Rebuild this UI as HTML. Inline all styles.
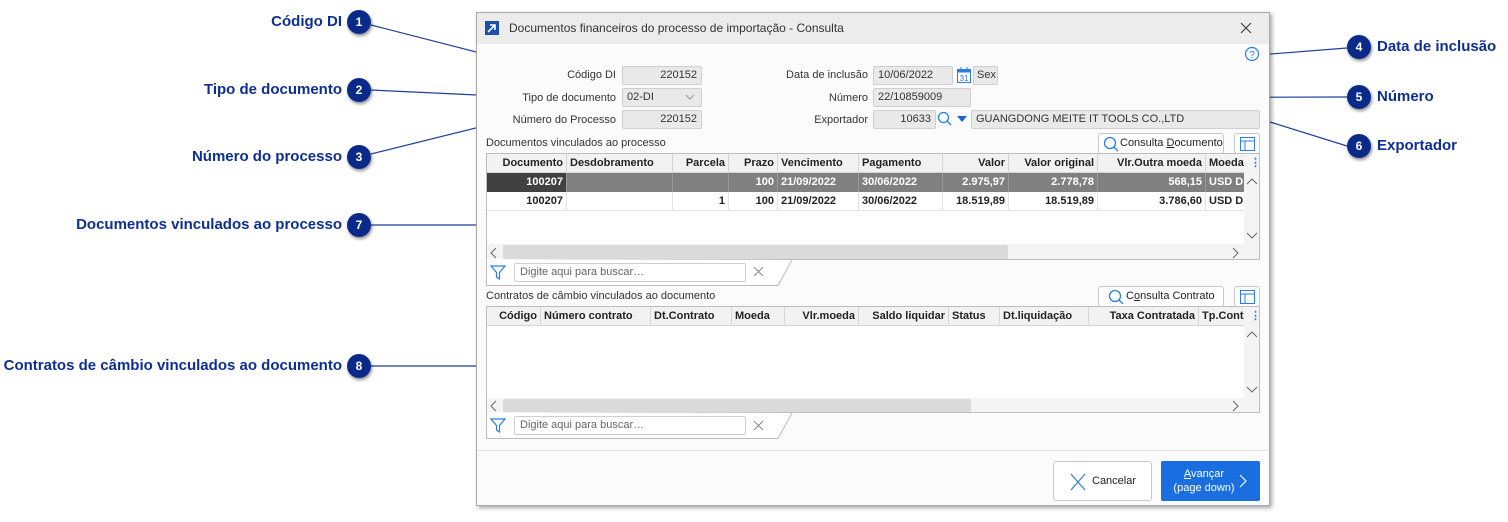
<!DOCTYPE html>
<html><head><meta charset="utf-8">
<style>
*{box-sizing:border-box;margin:0;padding:0}
body{width:1508px;height:522px;background:#fff;position:relative;overflow:hidden;font-family:"Liberation Sans",sans-serif;font-size:11px;color:#222}
.a{position:absolute}
.lbl{position:absolute;text-align:right;font-size:11px;color:#333;white-space:nowrap}
.inp{position:absolute;background:#e9e9e9;border:1px solid #cfcfcf;border-radius:2px;height:19px;line-height:17px;padding:0 4px;font-size:11px;color:#333;white-space:nowrap;overflow:hidden}
.r{text-align:right}
.co{position:absolute;font-weight:bold;font-size:15px;color:#0d2f91;white-space:nowrap;line-height:20px}
.bub{position:absolute;width:24px;height:24px;border-radius:50%;background:#0a2a8a;color:#fff;font-weight:bold;font-size:12px;text-align:center;line-height:24px;box-shadow:1px 2px 3px rgba(0,0,0,.45)}
.grid{position:absolute;border:1px solid #bdbdbd;background:#fff}
.hdr{position:absolute;left:0;top:0;height:19px;background:#f2f2f2;border-bottom:1px solid #d6d6d6;width:100%}
.c{position:absolute;height:19px;line-height:19px;font-weight:bold;font-size:11px;padding:0 3px;white-space:nowrap;overflow:hidden;border-right:1px solid #d6d6d6}
.btn{position:absolute;background:#fff;border:1px solid #c8c8c8;border-radius:3px;font-size:11px;color:#222}
</style></head><body>

<!-- callout lines -->
<svg class="a" style="left:0;top:0" width="1508" height="522">
<g stroke="#1b3f9e" stroke-width="1.2" fill="none">
<line x1="371" y1="25" x2="566" y2="75"/>
<line x1="371" y1="90" x2="519" y2="97"/>
<line x1="371" y1="154" x2="516" y2="118"/>
<line x1="1347" y1="48" x2="1005" y2="75"/>
<line x1="1347" y1="97" x2="982" y2="98"/>
<line x1="1347" y1="146" x2="1270" y2="122"/>
<line x1="371" y1="225" x2="486" y2="225"/>
<line x1="371" y1="366" x2="486" y2="366"/>
</g></svg>

<div class="co" style="right:1166px;top:12px">Código DI</div><div class="bub" style="left:347px;top:10px">1</div>
<div class="co" style="right:1166px;top:80px">Tipo de documento</div><div class="bub" style="left:347px;top:78px">2</div>
<div class="co" style="right:1166px;top:147px">Número do processo</div><div class="bub" style="left:347px;top:145px">3</div>
<div class="co" style="right:1166px;top:215px">Documentos vinculados ao processo</div><div class="bub" style="left:347px;top:213px">7</div>
<div class="co" style="right:1166px;top:356px">Contratos de câmbio vinculados ao documento</div><div class="bub" style="left:347px;top:354px">8</div>
<div class="bub" style="left:1347px;top:35px">4</div><div class="co" style="left:1377px;top:37px">Data de inclusão</div>
<div class="bub" style="left:1347px;top:85px">5</div><div class="co" style="left:1377px;top:87px">Número</div>
<div class="bub" style="left:1347px;top:134px">6</div><div class="co" style="left:1377px;top:136px">Exportador</div>

<!-- dialog -->
<div class="a" style="left:476px;top:12px;width:794px;height:494px;background:#fbfbfb;border:1px solid #a9a9a9;box-shadow:2px 2px 4px rgba(0,0,0,.35)">
 <div class="a" style="left:0;top:0;width:792px;height:31px;background:#ececec"></div>
</div>
<div class="a" style="left:485px;top:21px;width:14px;height:14px;background:#1c4fa8"></div>
<svg class="a" style="left:485px;top:21px" width="14" height="14"><path d="M3 11 L10 4 M5 4 H10 V9" stroke="#fff" stroke-width="1.6" fill="none"/></svg>
<div class="a" style="left:509px;top:21px;font-size:12px;color:#333">Documentos financeiros do processo de importação - Consulta</div>
<svg class="a" style="left:1240px;top:22px" width="12" height="12"><path d="M1 1L11 11M11 1L1 11" stroke="#444" stroke-width="1.2"/></svg>
<svg class="a" style="left:1244px;top:46px" width="16" height="16"><circle cx="8" cy="8" r="6.5" stroke="#2a7de1" fill="none" stroke-width="1.2"/><text x="8" y="12" font-size="10" text-anchor="middle" fill="#2a7de1" font-family="Liberation Sans">?</text></svg>

<!-- form -->
<div class="lbl" style="right:892px;top:69px">Código DI</div>
<div class="inp r" style="left:622px;top:66px;width:80px">220152</div>
<div class="lbl" style="right:892px;top:92px">Tipo de documento</div>
<div class="inp" style="left:622px;top:88px;width:80px">02-DI</div>
<svg class="a" style="left:685px;top:94px" width="10" height="6"><path d="M1 1L5 5L9 1" stroke="#999" fill="none"/></svg>
<div class="lbl" style="right:892px;top:114px">Número do Processo</div>
<div class="inp r" style="left:622px;top:110px;width:80px">220152</div>

<div class="lbl" style="right:640px;top:69px">Data de inclusão</div>
<div class="inp" style="left:873px;top:66px;width:80px">10/06/2022</div>
<svg class="a" style="left:956px;top:66px" width="16" height="18"><rect x="1.5" y="3.5" width="13" height="13" fill="#fff" stroke="#2a7de1"/><rect x="1.5" y="3.5" width="13" height="3" fill="#2a7de1"/><line x1="5" y1="1" x2="5" y2="5" stroke="#2a7de1"/><line x1="11" y1="1" x2="11" y2="5" stroke="#2a7de1"/><text x="8" y="15" font-size="8" text-anchor="middle" fill="#2a7de1" font-family="Liberation Sans">31</text></svg>
<div class="inp" style="left:973px;top:66px;width:25px;padding:0 3px">Sex</div>
<div class="lbl" style="right:640px;top:92px">Número</div>
<div class="inp" style="left:873px;top:88px;width:98px">22/10859009</div>
<div class="lbl" style="right:640px;top:114px">Exportador</div>
<div class="inp r" style="left:873px;top:110px;width:63px">10633</div>
<svg class="a" style="left:937px;top:111px" width="16" height="16"><circle cx="6.5" cy="6.5" r="5" stroke="#2a7de1" fill="none" stroke-width="1.3"/><line x1="10" y1="10" x2="14" y2="14" stroke="#2a7de1" stroke-width="1.3"/></svg>
<svg class="a" style="left:957px;top:116px" width="10" height="6"><path d="M0 0H10L5 6Z" fill="#1d63c9"/></svg>
<div class="inp" style="left:971px;top:110px;width:289px">GUANGDONG MEITE IT TOOLS CO.,LTD</div>

<!-- grid 1 -->
<div class="a" style="left:486px;top:137px;font-size:11px;color:#333">Documentos vinculados ao processo</div>
<div class="btn" style="left:1098px;top:133px;width:126px;height:21px"><svg class="a" style="left:4px;top:2px" width="16" height="16"><circle cx="7" cy="7" r="5.5" stroke="#2a7de1" fill="none" stroke-width="1.3"/><line x1="11" y1="11" x2="15" y2="15" stroke="#2a7de1" stroke-width="1.3"/></svg><span class="a" style="left:21px;top:3px">Consulta <u>D</u>ocumento</span></div>
<div class="btn" style="left:1234px;top:133px;width:26px;height:21px"><svg class="a" style="left:5px;top:3px" width="15" height="14"><rect x="0.5" y="0.5" width="14" height="13" fill="none" stroke="#2a7de1"/><line x1="0.5" y1="4" x2="14.5" y2="4" stroke="#2a7de1"/><line x1="5" y1="4" x2="5" y2="13.5" stroke="#2a7de1"/></svg></div>

<div class="grid" style="left:486px;top:153px;width:774px;height:107px;overflow:hidden">
 <div class="hdr"></div>
 <div class="c r" style="left:0;top:0;width:80px">Documento</div>
 <div class="c" style="left:80px;top:0;width:106px">Desdobramento</div>
 <div class="c r" style="left:186px;top:0;width:56px">Parcela</div>
 <div class="c r" style="left:242px;top:0;width:49px">Prazo</div>
 <div class="c" style="left:291px;top:0;width:81px">Vencimento</div>
 <div class="c" style="left:372px;top:0;width:84px">Pagamento</div>
 <div class="c r" style="left:456px;top:0;width:66px">Valor</div>
 <div class="c r" style="left:522px;top:0;width:89px">Valor original</div>
 <div class="c r" style="left:611px;top:0;width:108px">Vlr.Outra moeda</div>
 <div class="c" style="left:719px;top:0;width:38px;border:0">Moeda</div>
 <div class="a" style="left:0;top:19px;width:757px;height:19px;background:#808080"></div>
 <div class="a" style="left:0;top:19px;width:80px;height:19px;background:#414141"></div>
 <div style="color:#fff">
 <div class="c r" style="left:0;top:19px;width:80px;border-color:#999">100207</div>
 <div class="c" style="left:80px;top:19px;width:106px;border-color:#999"></div>
 <div class="c r" style="left:186px;top:19px;width:56px;border-color:#999"></div>
 <div class="c r" style="left:242px;top:19px;width:49px;border-color:#999">100</div>
 <div class="c" style="left:291px;top:19px;width:81px;border-color:#999">21/09/2022</div>
 <div class="c" style="left:372px;top:19px;width:84px;border-color:#999">30/06/2022</div>
 <div class="c r" style="left:456px;top:19px;width:66px;border-color:#999">2.975,97</div>
 <div class="c r" style="left:522px;top:19px;width:89px;border-color:#999">2.778,78</div>
 <div class="c r" style="left:611px;top:19px;width:108px;border-color:#999">568,15</div>
 <div class="c" style="left:719px;top:19px;width:38px;border:0">USD D</div>
 </div>
 <div class="a" style="left:0;top:56px;width:757px;border-top:1px solid #e3e3e3"></div>
 <div class="c r" style="left:0;top:38px;width:80px;border-color:#e3e3e3">100207</div>
 <div class="c" style="left:80px;top:38px;width:106px;border-color:#e3e3e3"></div>
 <div class="c r" style="left:186px;top:38px;width:56px;border-color:#e3e3e3">1</div>
 <div class="c r" style="left:242px;top:38px;width:49px;border-color:#e3e3e3">100</div>
 <div class="c" style="left:291px;top:38px;width:81px;border-color:#e3e3e3">21/09/2022</div>
 <div class="c" style="left:372px;top:38px;width:84px;border-color:#e3e3e3">30/06/2022</div>
 <div class="c r" style="left:456px;top:38px;width:66px;border-color:#e3e3e3">18.519,89</div>
 <div class="c r" style="left:522px;top:38px;width:89px;border-color:#e3e3e3">18.519,89</div>
 <div class="c r" style="left:611px;top:38px;width:108px;border-color:#e3e3e3">3.786,60</div>
 <div class="c" style="left:719px;top:38px;width:38px;border:0">USD D</div>
 <div class="a" style="left:757px;top:0;width:16px;height:90px;background:#f4f4f4"></div>
 <div class="a" style="left:763px;top:2px;color:#2a7de1;font-weight:bold">⋮</div>
 <svg class="a" style="left:759px;top:24px" width="12" height="8"><path d="M1 6L6 1L11 6" stroke="#666" fill="none"/></svg>
 <svg class="a" style="left:759px;top:78px" width="12" height="8"><path d="M1 1L6 6L11 1" stroke="#666" fill="none"/></svg>
 <div class="a" style="left:0;top:90px;width:773px;height:16px;background:#f4f4f4"></div>
 <div class="a" style="left:16px;top:91px;width:505px;height:14px;background:#dadada;border-radius:2px"></div>
 <svg class="a" style="left:3px;top:93px" width="8" height="12"><path d="M6 1L1 6L6 11" stroke="#666" fill="none"/></svg>
 <svg class="a" style="left:745px;top:93px" width="8" height="12"><path d="M1 1L6 6L1 11" stroke="#666" fill="none"/></svg>
</div>
<!-- filter 1 -->
<svg class="a" style="left:486px;top:259px" width="310" height="28"><path d="M0.5 0 V26.5 H292 L306 1" stroke="#bdbdbd" fill="#fff"/></svg>
<svg class="a" style="left:490px;top:265px" width="16" height="15"><path d="M1 1H15L9.5 7.5V14L6.5 12V7.5Z" stroke="#2a7de1" fill="none" stroke-width="1.2"/></svg>
<div class="a" style="left:514px;top:263px;width:232px;height:19px;border:1px solid #cfcfcf;background:#fff;border-radius:2px;padding:2px 5px;color:#666">Digite aqui para buscar…</div>
<svg class="a" style="left:753px;top:266px" width="11" height="11"><path d="M1 1L10 10M10 1L1 10" stroke="#888"/></svg>

<!-- grid 2 -->
<div class="a" style="left:486px;top:290px;font-size:11px;color:#333">Contratos de câmbio vinculados ao documento</div>
<div class="btn" style="left:1098px;top:286px;width:126px;height:21px"><svg class="a" style="left:9px;top:2px" width="16" height="16"><circle cx="7" cy="7" r="5.5" stroke="#2a7de1" fill="none" stroke-width="1.3"/><line x1="11" y1="11" x2="15" y2="15" stroke="#2a7de1" stroke-width="1.3"/></svg><span class="a" style="left:27px;top:3px">C<u>o</u>nsulta Contrato</span></div>
<div class="btn" style="left:1234px;top:286px;width:26px;height:21px"><svg class="a" style="left:5px;top:3px" width="15" height="14"><rect x="0.5" y="0.5" width="14" height="13" fill="none" stroke="#2a7de1"/><line x1="0.5" y1="4" x2="14.5" y2="4" stroke="#2a7de1"/><line x1="5" y1="4" x2="5" y2="13.5" stroke="#2a7de1"/></svg></div>
<div class="grid" style="left:486px;top:306px;width:774px;height:107px;overflow:hidden">
 <div class="hdr"></div>
 <div class="c r" style="left:0;top:0;width:54px">Código</div>
 <div class="c" style="left:54px;top:0;width:110px">Número contrato</div>
 <div class="c" style="left:164px;top:0;width:81px">Dt.Contrato</div>
 <div class="c" style="left:245px;top:0;width:53px">Moeda</div>
 <div class="c r" style="left:298px;top:0;width:74px">Vlr.moeda</div>
 <div class="c r" style="left:372px;top:0;width:90px">Saldo liquidar</div>
 <div class="c" style="left:462px;top:0;width:51px">Status</div>
 <div class="c" style="left:513px;top:0;width:89px">Dt.liquidação</div>
 <div class="c r" style="left:602px;top:0;width:110px">Taxa Contratada</div>
 <div class="c" style="left:712px;top:0;width:45px;border:0">Tp.Cont</div>
 <div class="a" style="left:757px;top:0;width:16px;height:91px;background:#f4f4f4"></div>
 <div class="a" style="left:763px;top:2px;color:#2a7de1;font-weight:bold">⋮</div>
 <svg class="a" style="left:759px;top:24px" width="12" height="8"><path d="M1 6L6 1L11 6" stroke="#666" fill="none"/></svg>
 <svg class="a" style="left:759px;top:79px" width="12" height="8"><path d="M1 1L6 6L11 1" stroke="#666" fill="none"/></svg>
 <div class="a" style="left:0;top:91px;width:773px;height:15px;background:#f4f4f4"></div>
 <div class="a" style="left:16px;top:92px;width:468px;height:13px;background:#dadada;border-radius:2px"></div>
 <svg class="a" style="left:3px;top:93px" width="8" height="12"><path d="M6 1L1 6L6 11" stroke="#666" fill="none"/></svg>
 <svg class="a" style="left:745px;top:93px" width="8" height="12"><path d="M1 1L6 6L1 11" stroke="#666" fill="none"/></svg>
</div>
<svg class="a" style="left:486px;top:412px" width="310" height="28"><path d="M0.5 0 V26.5 H292 L306 1" stroke="#bdbdbd" fill="#fff"/></svg>
<svg class="a" style="left:490px;top:418px" width="16" height="15"><path d="M1 1H15L9.5 7.5V14L6.5 12V7.5Z" stroke="#2a7de1" fill="none" stroke-width="1.2"/></svg>
<div class="a" style="left:514px;top:416px;width:232px;height:19px;border:1px solid #cfcfcf;background:#fff;border-radius:2px;padding:2px 5px;color:#666">Digite aqui para buscar…</div>
<svg class="a" style="left:753px;top:420px" width="11" height="11"><path d="M1 1L10 10M10 1L1 10" stroke="#888"/></svg>

<!-- footer -->
<div class="a" style="left:477px;top:450px;width:792px;border-top:1px solid #e2e2e2"></div>
<div class="btn" style="left:1053px;top:461px;width:99px;height:40px"><svg class="a" style="left:16px;top:11px" width="16" height="18"><path d="M1 1L15 17M15 1L1 17" stroke="#2a7de1" stroke-width="1.2"/></svg><span class="a" style="left:38px;top:13px">Cancelar</span></div>
<div class="a" style="left:1161px;top:461px;width:99px;height:40px;background:#1a6fe0;border-radius:2px;color:#fff;font-size:11px">
 <div class="a" style="left:0;top:6px;width:86px;text-align:center;line-height:14px"><u>A</u>vançar<br>(page down)</div>
 <svg class="a" style="left:78px;top:13px" width="8" height="14"><path d="M1 1L7 7L1 13" stroke="#fff" fill="none" stroke-width="1.2"/></svg>
</div>
</body></html>
